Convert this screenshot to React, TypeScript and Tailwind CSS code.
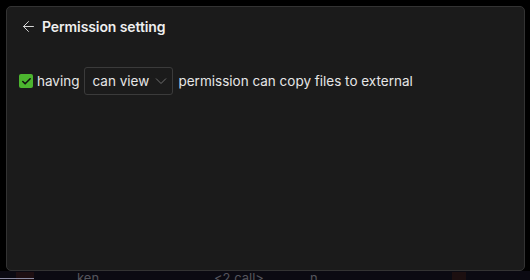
import { ArrowLeft, Check, ChevronDown } from 'lucide-react'

export default function App() {
  return (
    <div className="w-[530px] h-[280px] bg-black overflow-hidden flex flex-col font-['Inter',sans-serif]">
      <div className="pt-[6px] pl-[6px] pr-[5px]">
        <div className="h-[265px] rounded-[5px] border border-[#333333] bg-[#1b1b1b] px-[12px] pt-[10px]">
          <div className="flex items-center gap-[5px] h-[17px] mt-[1px]">
            <ArrowLeft size={17} strokeWidth={1.4} className="text-[#d8d8d8] ml-[1px]" />
            <span className="text-[14px] font-semibold text-[#efefef] tracking-[-0.1px]">Permission setting</span>
          </div>
          <div className="flex items-center mt-[32px] text-[13.5px] text-[#e6e6e6]">
            <span className="w-[14px] h-[14px] rounded-[2px] bg-[#4cb52f] flex items-center justify-center">
              <Check size={11} strokeWidth={3.5} className="text-[#111]" />
            </span>
            <span className="ml-[4px]">having</span>
            <div className="ml-[5px] h-[28px] w-[89px] rounded-[3px] border border-[#3b3b3b] flex items-center pl-[7px] pr-[5px] justify-between">
              <span>can view</span>
              <svg width="12" height="8" viewBox="0 0 12 8" fill="none" className="text-[#6f6f6f]">
                <path d="M1 1.5 L6 6.5 L11 1.5" stroke="currentColor" strokeWidth="1" />
              </svg>
            </div>
            <span className="ml-[5px]">permission can copy files to external</span>
          </div>
        </div>
      </div>
      <div className="flex-1 bg-[#0b0a12] relative text-[13px] text-[#55555d]">
        <span className="absolute left-[16px] top-[1px] w-[18px] h-[10px] bg-[#1e0f12]" />
        <span className="absolute left-[0px] top-[7px] w-[34px] h-[1px] bg-[#8a8aa0]" />
        <span className="absolute left-[77px] top-[-2px]">ken</span>
        <span className="absolute left-[214px] top-[-2px]">&lt;2 call&gt;</span>
        <span className="absolute left-[310px] top-[-2px]">n</span>
        <span className="absolute left-[452px] top-[1px] w-[14px] h-[10px] bg-[#1c0f10]" />
      </div>
    </div>
  )
}
